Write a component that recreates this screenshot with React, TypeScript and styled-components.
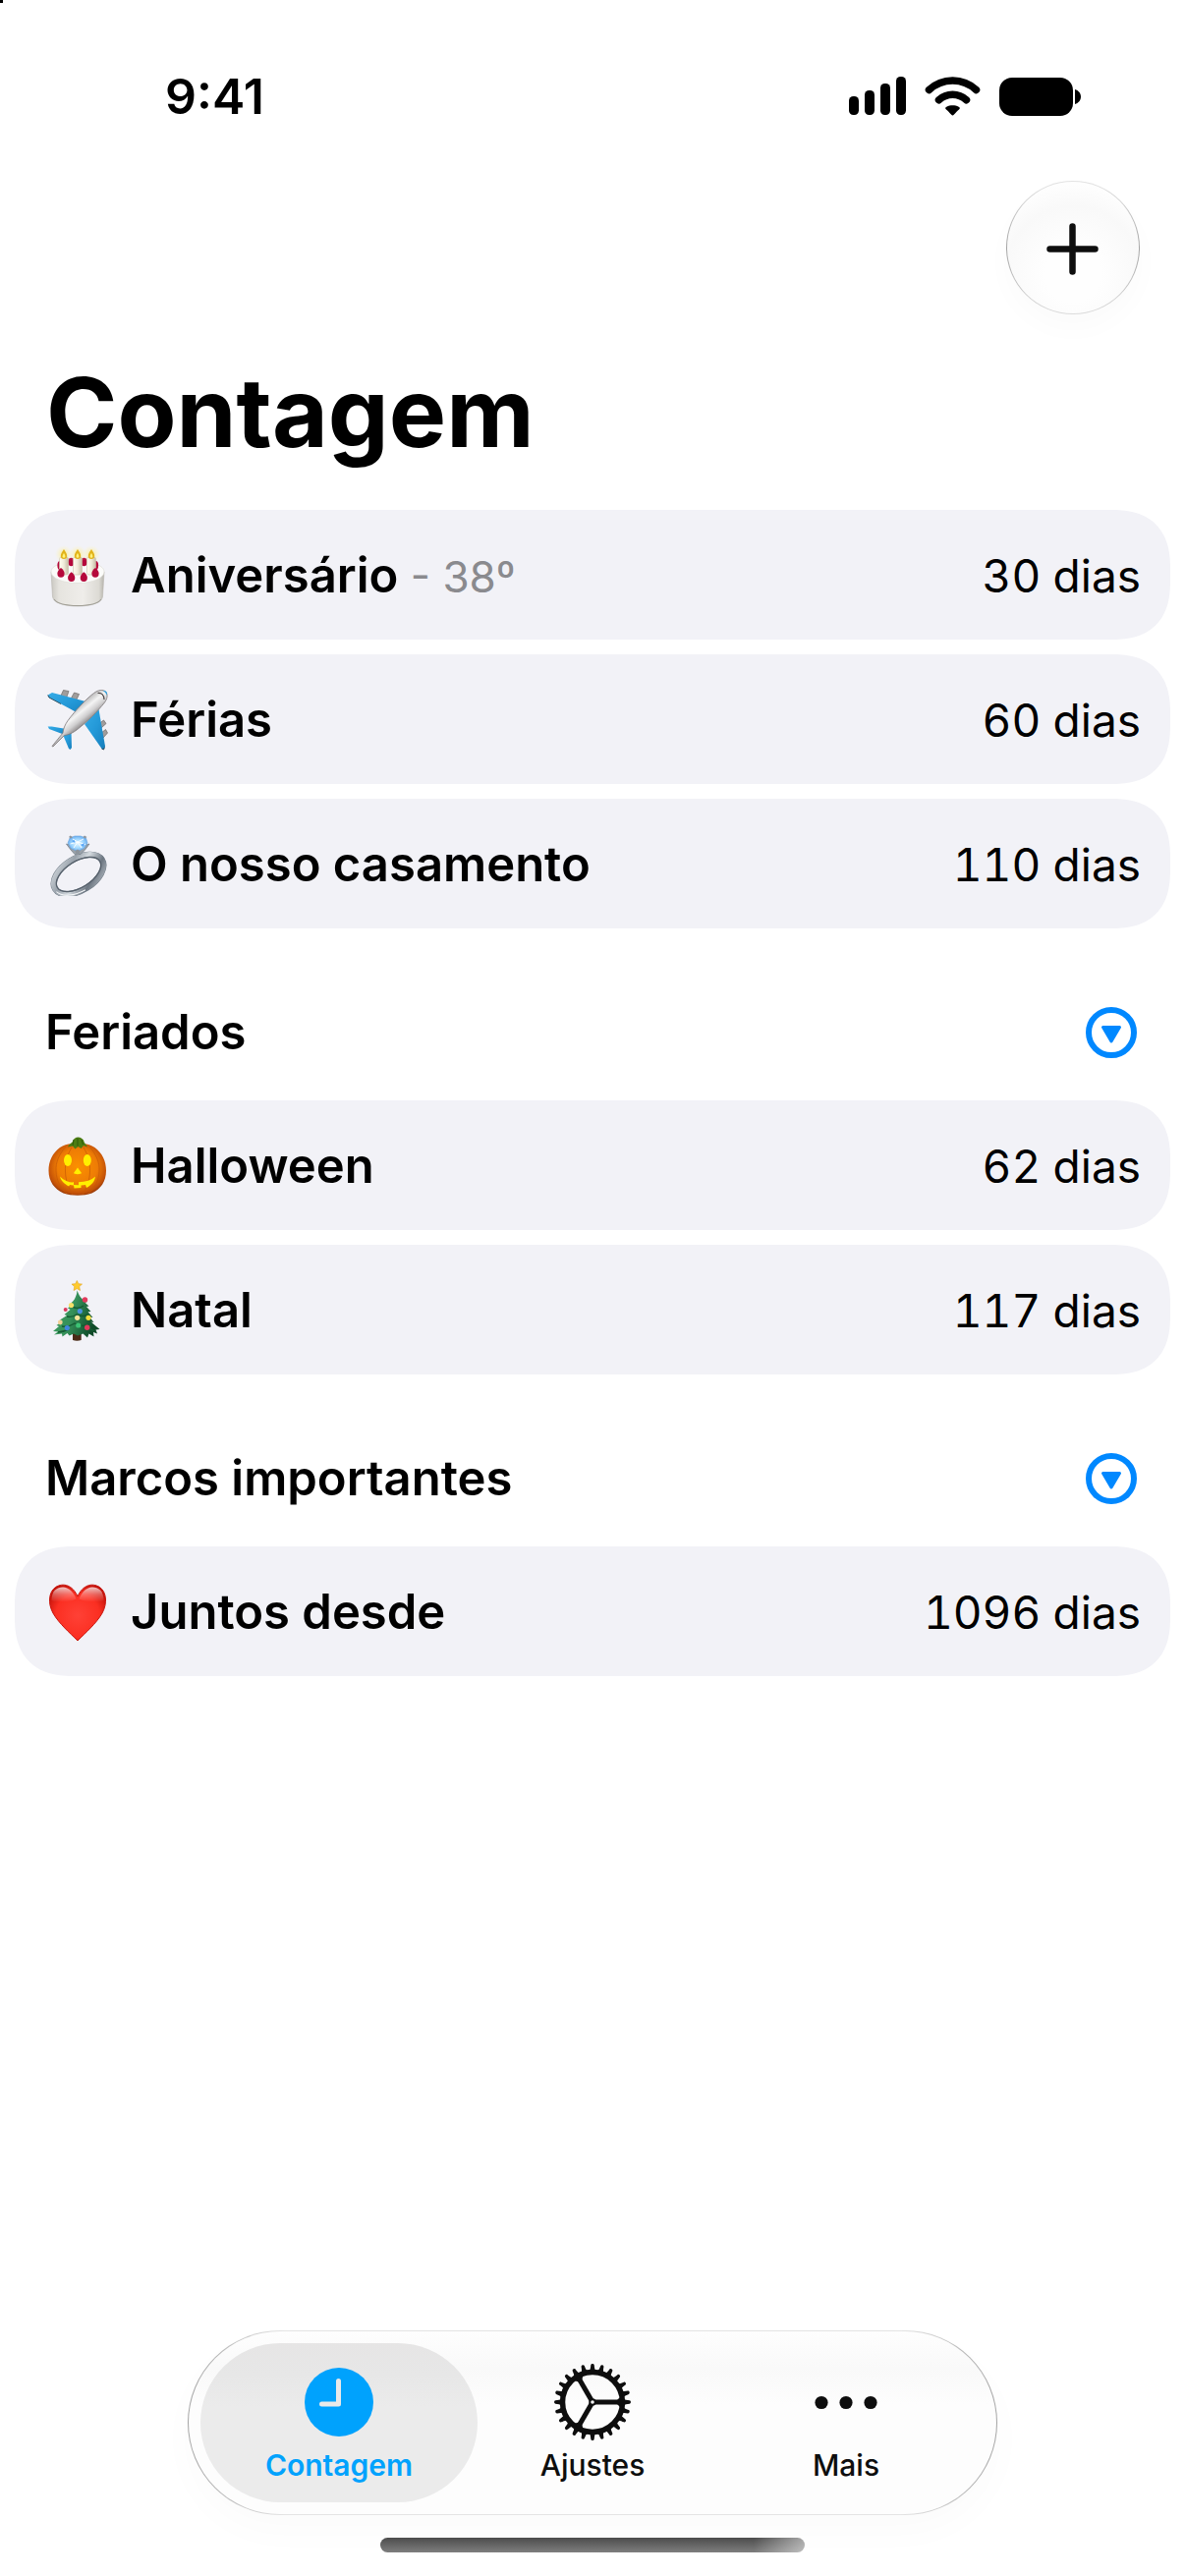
import { useState } from "react";
import type { ReactNode } from "react";
import styled, { createGlobalStyle } from "styled-components";

const GlobalStyle = createGlobalStyle`
  * {
    box-sizing: border-box;
  }

  body {
    margin: 0;
    background-color: #fff;
    color: #000;
    font-family: Inter, "Liberation Sans", sans-serif;
  }

  button {
    font-family: inherit;
    border: 0;
    padding: 0;
    background: none;
    cursor: pointer;
  }
`;

const Screen = styled.div`
  position: relative;
  display: flex;
  flex-direction: column;
  min-height: 100vh;
  padding: 68px 15px 24px;
`;

const ScreenCorner = styled.div`
  position: absolute;
  top: 0;
  left: 0;
  width: 3px;
  height: 3px;
  background-color: #000;
`;

const StatusBar = styled.header`
  display: flex;
  align-items: center;
  justify-content: space-between;
  height: 60px;
  padding: 0 90px 0 153px;
`;

const Clock = styled.time`
  font-size: 50px;
  font-weight: 600;
  line-height: 60px;
`;

const StatusIcons = styled.div`
  display: flex;
  align-items: center;
  gap: 19px;
`;

const Toolbar = styled.div`
  display: flex;
  justify-content: flex-end;
  padding: 56px 31px 0;
`;

const AddButton = styled.button`
  display: flex;
  align-items: center;
  justify-content: center;
  width: 136px;
  height: 136px;
  border: 1px solid transparent;
  border-radius: 50%;
  background:
    radial-gradient(circle at 50% 70%, #fefefe 25%, #f9f9f9 60%, #fefefe 80%) padding-box,
    linear-gradient(#e4e4e4, #a4a4a4 50%, #dcdcdc) border-box;
  box-shadow: 0 14px 30px rgba(0, 0, 0, 0.02);
`;

const Title = styled.h1`
  margin: 40px 0 39px;
  padding: 0 32px;
  font-size: 98px;
  font-weight: 700;
  line-height: 120px;
`;

const List = styled.ul`
  display: flex;
  flex-direction: column;
  gap: 15px;
  margin: 0;
  padding: 0;
  list-style: none;
`;

const Card = styled.li`
  display: flex;
  align-items: center;
  gap: 22px;
  min-height: 132px;
  padding: 2px 30px 0 32px;
  border-radius: 50px;
  background-color: #f2f2f7;

  @supports (corner-shape: squircle) {
    border-radius: 60px;
    corner-shape: superellipse(1.3);
  }
`;

const Name = styled.span`
  flex: 1;
  font-size: 49px;
  font-weight: 600;
  line-height: 60px;
`;

const Ordinal = styled.span`
  color: #8a8a8e;
  font-size: 44px;
  font-weight: 400;
`;

const Days = styled.span`
  font-size: 46px;
  line-height: 60px;
  font-variant-numeric: tabular-nums;
  white-space: nowrap;
`;

const SectionHeader = styled.div`
  display: flex;
  align-items: center;
  justify-content: space-between;
  margin: 76px 0 39px;
  padding: 0 32px 0 31px;
`;

const SectionTitle = styled.h2`
  margin: 0;
  font-size: 49px;
  font-weight: 600;
  line-height: 60px;
`;

const ToggleButton = styled.button<{ $open: boolean }>`
  display: flex;
  width: 56px;
  height: 56px;
  transform: rotate(${({ $open }) => ($open ? 0 : -90)}deg);
`;

const Bottom = styled.footer`
  display: flex;
  flex-direction: column;
  align-items: center;
  gap: 23px;
  margin-top: auto;
`;

const TabBar = styled.nav`
  display: flex;
  padding: 12px;
  border: 1px solid transparent;
  border-radius: 95px;
  background:
    linear-gradient(#fefefe, #f9f9f9 20%, #fdfdfd 40%, #fdfdfd) padding-box,
    linear-gradient(90deg, #a4a4a4, #e4e4e4 12%, #e4e4e4 88%, #a4a4a4) border-box;
  box-shadow: 0 16px 40px rgba(0, 0, 0, 0.02);
`;

const Tab = styled.button<{ $active: boolean }>`
  display: flex;
  flex-direction: column;
  align-items: center;
  width: 282px;
  height: 162px;
  padding-top: 20px;
  border-radius: 81px;
  background: ${({ $active }) => ($active ? "linear-gradient(#e6e5e5, #e7e7e7 20%, #ebebeb 40%)" : "none")};
  color: ${({ $active }) => ($active ? "#00a2fd" : "#0e0e0e")};
  font-size: 30px;
  font-weight: ${({ $active }) => ($active ? 600 : 500)};
  line-height: 36px;

  & + & {
    margin-left: -24px;
  }

  svg {
    margin-bottom: 6px;
  }
`;

const HomeIndicator = styled.div`
  width: 432px;
  max-width: 60%;
  height: 15px;
  border-radius: 8px;
  background:
    linear-gradient(90deg, transparent 88%, rgba(255, 255, 255, 0.5)),
    linear-gradient(#4c4c4c, #7e7e7e);
`;

const SignalIcon = () => (
  <svg width="58" height="40" viewBox="0 0 58 40" aria-hidden="true">
    <rect x="0" y="20" width="10" height="19" rx="4.5" />
    <rect x="16" y="14" width="10" height="25" rx="4.5" />
    <rect x="32" y="7" width="10" height="32" rx="4.5" />
    <rect x="48" y="0" width="10" height="39" rx="4.5" />
  </svg>
);

const WifiIcon = () => (
  <svg width="57" height="43" viewBox="0 0 57 43" aria-hidden="true">
    <g fill="none" stroke="#000" strokeWidth="7.5" strokeLinecap="round">
      <path d="M4.500 14.500A35 35 0 0 1 52.500 14.500" />
      <path d="M14.500 24.800A20.500 20.500 0 0 1 42.500 24.800" />
    </g>
    <path d="M22 34.500c-1.300-1-1-2.200.3-2.800 3.800-1.900 8.600-1.900 12.400 0 1.300.6 1.600 1.800.3 2.800-1.500 1-3.400 3.300-5 5-1.200 1.200-1.800 1.200-3 0-1.600-1.700-3.500-4-5-5z" />
  </svg>
);

const BatteryIcon = () => (
  <svg width="84" height="40" viewBox="0 0 84 40" aria-hidden="true">
    <rect x="0" y="1" width="75" height="39" rx="13" />
    <path d="M77 13c3.500 1 6 4 6 7.500s-2.500 6.500-6 7.500z" />
  </svg>
);

const PlusIcon = () => (
  <svg width="56" height="56" viewBox="0 0 56 56" fill="none" stroke="#0e0e0e" strokeWidth="6.5" strokeLinecap="round">
    <path d="M27.500 6.500v46M4.500 29.500h46" />
  </svg>
);

const ToggleIcon = () => (
  <svg width="56" height="56" viewBox="0 0 56 56" fill="#08f" stroke="#08f">
    <circle cx="28" cy="28" r="23" fill="none" strokeWidth="6" />
    <path d="M19.500 22.500h17l-8.500 14.500z" strokeWidth="3" strokeLinejoin="round" />
  </svg>
);

const CakeIcon = () => (
  <svg width="64" height="64" viewBox="0 0 64 64">
    <defs>
      <linearGradient id="cakeSide" x1="0" x2="1">
        <stop offset="0" stopColor="#c9c7c1" />
        <stop offset="0.15" stopColor="#e6e4df" />
        <stop offset="0.6" stopColor="#efedea" />
        <stop offset="0.9" stopColor="#dcdad4" />
        <stop offset="1" stopColor="#b5b3ab" />
      </linearGradient>
      <linearGradient id="candle" x1="0" x2="1">
        <stop offset="0" stopColor="#fffdf0" />
        <stop offset="0.5" stopColor="#f0ebda" />
        <stop offset="1" stopColor="#c6bea6" />
      </linearGradient>
      <radialGradient id="glow">
        <stop offset="0" stopColor="#ffe95c" stopOpacity="0.7" />
        <stop offset="1" stopColor="#fff6b0" stopOpacity="0" />
      </radialGradient>
    </defs>
    <path d="M5 28L6.500 53c.4 6 11 10 25.500 10s25.100-4 25.500-10L59 28z" fill="url(#cakeSide)" stroke="#b8b6af" strokeWidth="0.6" />
    <path d="M8 56c3 4.500 12.500 6.500 24 6.500s21-2 24-6.500" fill="none" stroke="#a09e95" strokeWidth="1.2" />
    <path d="M5 28c0 6 11 11.500 27 11.500S59 34 59 28c0-6.500-12-10.500-27-10.500S5 21.500 5 28z" fill="#fbfbf9" stroke="#dedcd7" strokeWidth="0.7" />
    <g fill="#b5093b">
      <ellipse cx="14" cy="21.500" rx="2.600" ry="4.500" />
      <ellipse cx="25.500" cy="18" rx="3.200" ry="4.200" />
      <ellipse cx="38.500" cy="18" rx="3.200" ry="4.200" />
      <ellipse cx="50.500" cy="21.500" rx="2.600" ry="4.500" />
    </g>
    {[18, 32, 46].map((x) => (
      <g key={x}>
        <circle cx={x} cy="10" r="9" fill="url(#glow)" />
        <rect x={x - 4.5} y="13" width="9" height="18" rx="2" fill="url(#candle)" stroke="#c9c2ad" strokeWidth="0.6" />
        <path d={`M${x} 5c2.200 3.200 3.200 5 3.200 7a3.200 3 0 0 1-6.400 0c0-2 1-3.800 3.200-7z`} fill="#e2b31a" />
        <path d={`M${x} 9c1 1.500 1.400 2.500 1.400 3.400a1.400 1.400 0 0 1-2.800 0c0-.9.4-1.900 1.400-3.400z`} fill="#fff27c" />
      </g>
    ))}
    <g fill="#b5093b">
      <path d="M15 24c2.200 1.600 3.600 3.600 3.600 5.800a3.600 4 0 0 1-7.200 0c0-2.200 1.400-4.200 3.600-5.800z" />
      <path d="M25.700 28.300c2.200 1.600 3.600 3.600 3.600 5.800a3.600 4 0 0 1-7.200 0c0-2.200 1.400-4.200 3.600-5.800z" />
      <path d="M38.300 28.300c2.200 1.600 3.600 3.600 3.600 5.800a3.600 4 0 0 1-7.200 0c0-2.200 1.400-4.200 3.600-5.800z" />
      <path d="M50 24c2.200 1.600 3.600 3.600 3.600 5.800a3.600 4 0 0 1-7.200 0c0-2.200 1.400-4.200 3.600-5.800z" />
    </g>
  </svg>
);

const PlaneIcon = () => (
  <svg width="64" height="64" viewBox="0 0 64 64">
    <defs>
      <linearGradient id="fuselage" x1="0.35" y1="0.3" x2="0.62" y2="0.64">
        <stop offset="0" stopColor="#a3a1a2" />
        <stop offset="0.4" stopColor="#f4f4f4" />
        <stop offset="0.65" stopColor="#d0cfd0" />
        <stop offset="1" stopColor="#6f6a6b" />
      </linearGradient>
      <linearGradient id="wing" x1="0" y1="0" x2="1" y2="1">
        <stop offset="0" stopColor="#35abe6" />
        <stop offset="0.5" stopColor="#2499d8" />
        <stop offset="1" stopColor="#167ebb" />
      </linearGradient>
    </defs>
    <g fill="#a09d9c" stroke="#6d6765" strokeWidth="0.7">
      <path d="M15 7l2.500-5.500 5.500 1-2.500 7z" />
      <path d="M25.500 9.500l3-5.500 5 1.500-3 6.500z" />
      <path d="M53.500 36l5-4 2.500 3.500-5 4.500z" />
      <path d="M56 45l4.500-3.500 2 3.500-4.500 5z" />
    </g>
    <path d="M1.700 6.500L6 4l38 10-9.500 12L3 9z" fill="url(#wing)" />
    <path d="M39 36l14.500-15L60 58.500l-1.500 3.500-2-1z" fill="url(#wing)" />
    <path d="M1.700 38.500h4l15 2.500-3 5.500L3 41z" fill="url(#wing)" />
    <path d="M17.300 47.500l8.200-3L26 60l-1.500 2-1.500-1z" fill="url(#wing)" />
    <path d="M1.700 6.500L3 9l12 6.500M56.500 61l2 1 1-2.500" fill="none" stroke="#24414f" strokeWidth="0.9" />
    <path
      d="M6 58.500L17 45c.3-4 2-8 5-12.500C29 23 40.500 10.500 48.500 4.500 53 1 58 .6 60.500 3s2 7-1 11C52 23.500 42 33.500 31 42c-4 3-8 5-12.500 5.500L7 59z"
      fill="url(#fuselage)"
      stroke="#7d797a"
      strokeWidth="0.8"
    />
    <path d="M57.500 2c3.500-.5 5 1.500 4.500 5-1-2.500-2.500-4-4.500-5z" fill="#2a9fdc" />
    <path d="M52.500 4.500c4-.5 6.500 2 6.500 6.500" fill="none" stroke="#4a4546" strokeWidth="1.2" />
  </svg>
);

const RingIcon = () => (
  <svg width="64" height="64" viewBox="0 0 64 64">
    <defs>
      <linearGradient id="band" x1="0" y1="0" x2="1" y2="1">
        <stop offset="0" stopColor="#d8dde2" />
        <stop offset="0.3" stopColor="#99a2ab" />
        <stop offset="0.5" stopColor="#d5dbe0" />
        <stop offset="0.75" stopColor="#6c7681" />
        <stop offset="1" stopColor="#bcc3ca" />
      </linearGradient>
      <radialGradient id="gem">
        <stop offset="0" stopColor="#e3f6ff" />
        <stop offset="0.55" stopColor="#a9dcff" />
        <stop offset="1" stopColor="#6eb2f2" />
      </radialGradient>
    </defs>
    <g transform="rotate(-32 33 42)">
      <ellipse cx="33" cy="42" rx="28" ry="16" fill="none" stroke="#6f7a85" strokeWidth="6.5" />
      <ellipse cx="33" cy="42" rx="28.300" ry="16.300" fill="none" stroke="url(#band)" strokeWidth="5" />
      <ellipse cx="33" cy="42" rx="25.500" ry="13.300" fill="none" stroke="#56606b" strokeWidth="1.2" />
      <path d="M4.500 45c2 7.500 13 13.500 26 14" fill="none" stroke="#f4f6f8" strokeWidth="1" />
    </g>
    <path d="M20.500 11l4.500 6 4 4.500h6l4.500-4.500 4.500-6-3.500 1-8 5-8.500-5z" fill="#9aa2aa" stroke="#707a84" strokeWidth="0.7" />
    <path d="M24 5l5-2h6l5.500 2L42 10l-3.500 5.500L32 18.500l-7-3L22 10z" fill="url(#gem)" stroke="#6aa3dc" strokeWidth="0.6" />
    <path d="M27 6l5 3 6-3M24.500 11l7.500-2 8 2.500M28 15l4-6 4 6" fill="none" stroke="#fff" strokeWidth="0.9" />
    <path d="M25.500 8l3-1 1 3zM35 12l4-2-1 4z" fill="#5aa5f5" />
    <g fill="#8d949c">
      <path d="M23 4l1.500-1.500L27 4l-2 1.500zM37.500 4L39 2.500 41.500 4l-2 1.500z" />
      <path d="M29.500 18l2.500-1.500 2.500 1.500-1 4h-3z" />
    </g>
  </svg>
);

const PumpkinIcon = () => (
  <svg width="64" height="64" viewBox="0 0 64 64">
    <defs>
      <radialGradient id="pumpkin" cx="0.5" cy="0.45" r="0.58">
        <stop offset="0" stopColor="#fb9000" />
        <stop offset="0.6" stopColor="#ee7c05" />
        <stop offset="0.88" stopColor="#c25008" />
        <stop offset="1" stopColor="#8a3208" />
      </radialGradient>
    </defs>
    <path d="M32 10.500c5-2.500 12-1.500 17.500 2.500C57 18.500 61 27 61 36.500c0 11-5.500 19-14.500 23-9 3-20 3-29 0C8.500 55.500 2.500 47.500 2.500 36.500 2.500 27 6.500 18.500 14 13c5.500-4 13-5 18-2.500z" fill="url(#pumpkin)" />
    <g fill="none" stroke="#c75a06" strokeWidth="1" strokeOpacity="0.7">
      <path d="M20 12c-7 8-10.500 16-10 25 .4 9 4 17 11 23" />
      <path d="M26 13c-5 8-7 16-6.500 25 .3 8 3 16 7.500 23" />
      <path d="M38 13c5 8 7 16 6.500 25-.3 8-3 16-7.500 23" />
      <path d="M44 12c7 8 10.500 16 10 25-.4 9-4 17-11 23" />
    </g>
    <path d="M22 12.500c1-3 4-4 5-5.500.5-3 3-4.600 5.500-4.600S37 4 38 5.500c.5 3 3 4.500 4 7l-4-1.500-2.500 3-3-2-3 2.500-2.500-3z" fill="#4c7d12" />
    <path d="M28 5l-1 6M32 3.500v8M36 5l1.500 5" stroke="#2f5a0b" strokeWidth="1" />
    <g fill="#ffef00">
      <ellipse cx="22" cy="26" rx="4" ry="6" />
      <ellipse cx="41.800" cy="26" rx="4" ry="6" />
      <path d="M32 33.500l4 5.500c-.5 1.500-7.500 1.500-8 0z" />
      <path d="M14 42.500c4 4 9 6 13 6l1-.5v3l5 .3v-3c7-.3 13-2 17-5.800-.5 5-4 9-9 11.500l-1-3-4.500.5v2.500l-7 .6-.5-3.100-4-.5-1 1.500c-5-3-8-5.500-9-10z" />
    </g>
  </svg>
);

const TreeIcon = () => (
  <svg width="64" height="64" viewBox="0 0 64 64">
    <defs>
      <linearGradient id="tree" x1="0" x2="1" y2="0.3">
        <stop offset="0" stopColor="#3f9e5d" />
        <stop offset="0.5" stopColor="#35915a" />
        <stop offset="1" stopColor="#0f4a28" />
      </linearGradient>
    </defs>
    <path d="M27 54h8.700v8c-2.500 1-6.200 1-8.700 0z" fill="#4a2a17" />
    <path
      d="M31.500 11.500c1.500 4 3 7 5.500 9l5 2.500-2.500.8 4 3.700-2.500.5 4.500 5-3 .2 5 5.800-3.500-.5 4.500 5.500-3-.5L54.500 51l-4 .5 1.500 4-4-1.500.5 4.500-5-3-1.500 4-4.500-4-5.500 2-4-2-4.500 2-2-2.500-5 3.500-.5-3-8 1 4-3-5-.5 6-5-2.500-1 6-4-2.500-1.500 7-4.500-2.500-1 6-5-2.500-1.500 5-4-2-1c3.500-2.500 5-6 6-9.500z"
      fill="url(#tree)"
    />
    <g fill="none" stroke="#145a32" strokeWidth="1.4">
      <path d="M26 28c4 2 8 2 12-1M21 38c4 1 7 0 10-2 4 2 8 2 12 0M16 48c6 1 10-1 13-3 5 3 12 3 18 0" />
      <path d="M12 54c5 0 9-2 11-3M40 53l5-2 4 2" />
    </g>
    <path d="M31.300 1.500l1.500 3.200 3.700.4-2.800 2.500.8 3.900-3.200-1.900-3.300 1.900.8-3.900L26 5.100l3.800-.4z" fill="#ffcb2e" stroke="#e0a11b" strokeWidth="0.6" />
    <g>
      <circle cx="39.500" cy="21" r="2.700" fill="#e23a5c" />
      <circle cx="25.500" cy="26.500" r="2.600" fill="#f4e06a" />
      <circle cx="19.700" cy="31" r="2" fill="#dc3a5c" />
      <circle cx="34.300" cy="32.600" r="2.600" fill="#4a90dd" />
      <circle cx="31.700" cy="39.300" r="2.600" fill="#f6e59a" />
      <circle cx="43" cy="39.300" r="2.600" fill="#f5dd3c" />
      <circle cx="14.300" cy="44" r="2.400" fill="#f2cf95" />
      <circle cx="32.700" cy="47" r="2.600" fill="#3cc274" />
      <circle cx="21.300" cy="49.600" r="2.600" fill="#3f86dc" />
      <circle cx="41.700" cy="49.200" r="2.700" fill="#e23a5c" />
    </g>
  </svg>
);

const HeartIcon = () => (
  <svg width="64" height="64" viewBox="0 0 64 64">
    <defs>
      <radialGradient id="heart" cx="0.5" cy="0.55" r="0.6">
        <stop offset="0" stopColor="#ff4136" />
        <stop offset="0.65" stopColor="#fb2f22" />
        <stop offset="1" stopColor="#c4120a" />
      </radialGradient>
      <linearGradient id="heartShine" x1="0" y1="0" x2="0" y2="1">
        <stop offset="0" stopColor="#fff" stopOpacity="0.75" />
        <stop offset="0.5" stopColor="#fff" stopOpacity="0.3" />
        <stop offset="1" stopColor="#fff" stopOpacity="0" />
      </linearGradient>
    </defs>
    <path
      d="M32 61C24 53 13 43.500 7 33 1.500 23 2.500 11.500 9.500 6.500c8-5 17.500-2 22.500 9.500 5-11.500 14.500-14.500 22.500-9.500 7 5 8 16.500 2.500 26.500C51 43.500 40 53 32 61z"
      fill="url(#heart)"
      stroke="#c8140c"
      strokeWidth="1"
    />
    <path d="M5.500 20C5.500 10 11 6.500 17 6.500c6 .2 10.500 4.500 13.500 12C25 21 12 23 5.500 20z" fill="url(#heartShine)" />
    <path d="M58.500 20c0-10-5.500-13.500-11.500-13.500-6 .2-10.500 4.500-13.500 12C39 21 52 23 58.500 20z" fill="url(#heartShine)" />
  </svg>
);

const ClockIcon = () => (
  <svg width="80" height="80" viewBox="0 0 80 80" fill="none">
    <circle cx="40" cy="40" r="35" fill="#00a2fd" />
    <path d="M39.500 18.500V42H22.500" stroke="#e9e9e9" strokeWidth="5" strokeLinecap="round" strokeLinejoin="round" />
  </svg>
);

const GearIcon = () => (
  <svg width="80" height="80" viewBox="0 0 80 80" fill="none" stroke="#0e0e0e">
    <circle cx="40" cy="40" r="30.500" strokeWidth="5.500" />
    {Array.from({ length: 24 }, (_, i) => (
      <path
        key={i}
        d="M36 9C38 7.500 38 4.500 38.300 2.300c.3-1.700 3.100-1.700 3.400 0 .3 2.200.3 5.200 2.300 6.700z"
        fill="#0e0e0e"
        stroke="none"
        transform={`rotate(${i * 15} 40 40)`}
      />
    ))}
    {[0, 120, 240].map((angle) => (
      <g key={angle} transform={`rotate(${angle} 40 40)`}>
        <path d="M42.500 40H70" strokeWidth="5" />
        <path d="M63 40l6-6v12z" fill="#0e0e0e" stroke="none" />
      </g>
    ))}
    <circle cx="40" cy="40" r="2.800" strokeWidth="2" fill="#fdfdfd" />
  </svg>
);

const DotsIcon = () => (
  <svg width="80" height="80" viewBox="0 0 80 80" fill="#0e0e0e">
    <circle cx="15" cy="40.500" r="6.600" />
    <circle cx="40" cy="40.500" r="6.600" />
    <circle cx="65" cy="40.500" r="6.600" />
  </svg>
);

interface Countdown {
  name: string;
  ordinal?: string;
  days: number;
  icon: ReactNode;
}

const personal: Countdown[] = [
  { name: "Aniversário", ordinal: "38º", days: 30, icon: <CakeIcon /> },
  { name: "Férias", days: 60, icon: <PlaneIcon /> },
  { name: "O nosso casamento", days: 110, icon: <RingIcon /> },
];

const holidays: Countdown[] = [
  { name: "Halloween", days: 62, icon: <PumpkinIcon /> },
  { name: "Natal", days: 117, icon: <TreeIcon /> },
];

const milestones: Countdown[] = [
  { name: "Juntos desde", days: 1096, icon: <HeartIcon /> },
];

const tabs = [
  { id: "contagem", text: "Contagem", icon: <ClockIcon /> },
  { id: "ajustes", text: "Ajustes", icon: <GearIcon /> },
  { id: "mais", text: "Mais", icon: <DotsIcon /> },
];

const CountdownList = ({ items }: { items: Countdown[] }) => (
  <List>
    {items.map((item) => (
      <Card key={item.name}>
        {item.icon}
        <Name>
          {item.name}
          {item.ordinal && <Ordinal> - {item.ordinal}</Ordinal>}
        </Name>
        <Days>{item.days} dias</Days>
      </Card>
    ))}
  </List>
);

const Section = ({ title, items }: { title: string; items: Countdown[] }) => {
  const [open, setOpen] = useState(true);

  return (
    <section>
      <SectionHeader>
        <SectionTitle>{title}</SectionTitle>
        <ToggleButton
          type="button"
          $open={open}
          aria-label={title}
          aria-expanded={open}
          onClick={() => setOpen(!open)}
        >
          <ToggleIcon />
        </ToggleButton>
      </SectionHeader>
      {open && <CountdownList items={items} />}
    </section>
  );
};

const App = () => {
  const [activeTab, setActiveTab] = useState("contagem");

  return (
    <>
      <GlobalStyle />
      <Screen>
        <ScreenCorner />
        <StatusBar>
          <Clock>9:41</Clock>
          <StatusIcons>
            <SignalIcon />
            <WifiIcon />
            <BatteryIcon />
          </StatusIcons>
        </StatusBar>
        <Toolbar>
          <AddButton type="button" aria-label="Adicionar">
            <PlusIcon />
          </AddButton>
        </Toolbar>
        <main>
          <Title>Contagem</Title>
          <CountdownList items={personal} />
          <Section title="Feriados" items={holidays} />
          <Section title="Marcos importantes" items={milestones} />
        </main>
        <Bottom>
          <TabBar>
            {tabs.map((tab) => (
              <Tab
                key={tab.id}
                type="button"
                $active={activeTab === tab.id}
                aria-current={activeTab === tab.id ? "page" : undefined}
                onClick={() => setActiveTab(tab.id)}
              >
                {tab.icon}
                {tab.text}
              </Tab>
            ))}
          </TabBar>
          <HomeIndicator />
        </Bottom>
      </Screen>
    </>
  );
};

export default App;
